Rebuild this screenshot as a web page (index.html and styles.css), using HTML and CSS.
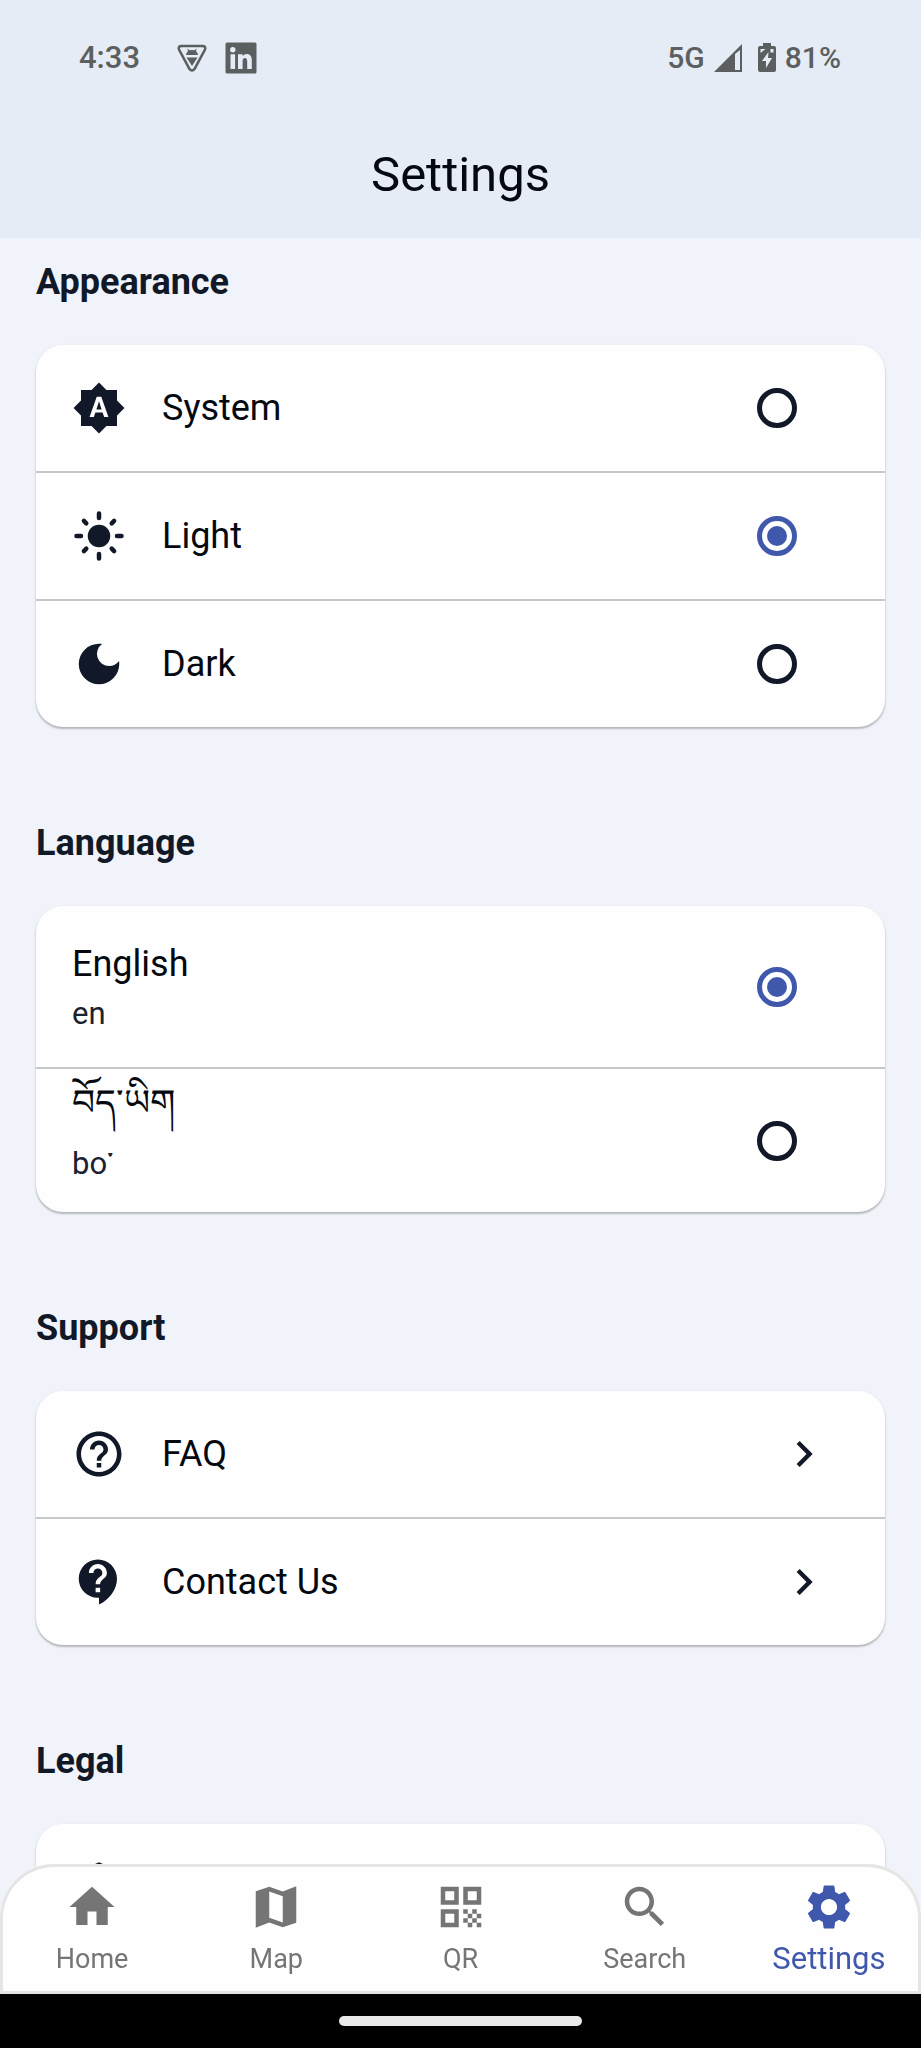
FILE: index.html
```html
<!DOCTYPE html>
<html lang="en">
<head>
<meta charset="utf-8">
<meta name="viewport" content="width=device-width, initial-scale=1">
<title>Settings</title>
<link rel="stylesheet" href="styles.css">
</head>
<body>
<header class="top">
  <div class="status">
    <div class="status-group status-left">
      <span>4:33</span>
      <span class="notices">
        <svg class="notice" viewBox="0 0 32 32" aria-hidden="true"><path d="M5 4h22q3 .5 2 3.500L18.500 27q-2.500 3-5 0L3 7.500q-1-3 2-3.500z" fill="none" stroke="currentColor" stroke-width="2.600"/><path d="M10 13q.4-3 2.200-4L11 6.800 14 8.200q2-.5 4 0l3-1.400L19.800 9q1.800 1 2.200 4zM10.500 15.500h11L16 24z" fill="currentColor"/></svg>
        <svg class="notice" viewBox="0 0 32 32" aria-hidden="true"><path fill="currentColor" fill-rule="evenodd" d="M2 .5h28q1.500 0 1.500 1.500v28q0 1.500-1.500 1.500H2Q.5 31.500.5 30V2Q.5.5 2 .5zM5.500 12.200V27h4.600V12.200zM7.800 5a2.700 2.700 0 1 0 0 5.400 2.700 2.700 0 0 0 0-5.400zM13 12.200V27h4.600v-8c0-3.800 4.600-4 4.600 0v8h4.600v-9.200c0-6.800-6.800-7.200-9.200-3.700v-1.900z"/></svg>
      </span>
    </div>
    <div class="status-group status-right">
      <span>5G</span>
      <svg class="signal" viewBox="0 0 28 28" aria-hidden="true"><path fill="currentColor" fill-rule="evenodd" d="M28 0v28H0zM21 10v16h5V6z"/></svg>
      <svg class="battery" viewBox="0 0 18 30" aria-hidden="true"><path fill="currentColor" fill-rule="evenodd" d="M5 0h8v3h3q2 0 2 2v22q0 2-2 2H2q-2 0-2-2V5q0-2 2-2h3zM10.500 9L4 18h4v7l6-10h-4zM2.500 6v4l5-4zM15.500 6h-3v3.500h3z"/></svg>
      <span>81%</span>
    </div>
  </div>
  <h1 class="title">Settings</h1>
</header>

<main class="content">
  <section class="section">
    <h2 class="heading" id="appearance">Appearance</h2>
    <div class="card" role="radiogroup" aria-labelledby="appearance">
      <label class="row">
        <svg class="icon" viewBox="0 0 24 24" aria-hidden="true"><path d="M10.850 12.650h2.300L12 9l-1.150 3.650zM20 8.690V4h-4.690L12 .69 8.690 4H4v4.690L.69 12 4 15.310V20h4.690L12 23.310 15.310 20H20v-4.690L23.310 12 20 8.690zM14.300 16l-.7-2h-3.200l-.7 2H7.800L11 7h2l3.200 9h-1.900z"/></svg>
        <span class="label">System</span>
        <input class="radio" type="radio" name="theme">
      </label>
      <label class="row">
        <svg class="icon" viewBox="0 0 24 24" aria-hidden="true"><circle cx="12" cy="12" r="5"/><path class="rays" d="M2 12h2M20 12h2M12 2v2M12 20v2M5.290 5.290l1.060 1.060M17.650 17.650l1.060 1.060M18.710 5.290l-1.060 1.060M6.350 17.650l-1.060 1.060"/></svg>
        <span class="label">Light</span>
        <input class="radio" type="radio" name="theme" checked>
      </label>
      <label class="row">
        <svg class="icon" viewBox="0 0 24 24" aria-hidden="true"><path d="M12 3a9 9 0 1 0 9 9c0-.46-.04-.92-.1-1.360a5.389 5.389 0 0 1-4.400 2.260 5.403 5.403 0 0 1-3.140-9.800c-.44-.06-.9-.1-1.360-.1z"/></svg>
        <span class="label">Dark</span>
        <input class="radio" type="radio" name="theme">
      </label>
    </div>
  </section>

  <section class="section">
    <h2 class="heading" id="language">Language</h2>
    <div class="card" role="radiogroup" aria-labelledby="language">
      <label class="row row-english">
        <span class="label">English<small class="code">en</small></span>
        <input class="radio" type="radio" name="language" checked>
      </label>
      <label class="row row-tibetan">
        <span class="label" lang="bo">བོད་ཡིག<small class="code">bo་</small></span>
        <input class="radio" type="radio" name="language">
      </label>
    </div>
  </section>

  <section class="section">
    <h2 class="heading">Support</h2>
    <div class="card">
      <a class="row row-link" href="#faq">
        <svg class="icon" viewBox="0 0 24 24" aria-hidden="true"><path d="M11 18h2v-2h-2v2zm1-16C6.480 2 2 6.480 2 12s4.480 10 10 10 10-4.480 10-10S17.520 2 12 2zm0 18c-4.410 0-8-3.590-8-8s3.590-8 8-8 8 3.590 8 8-3.590 8-8 8zm0-14c-2.210 0-4 1.790-4 4h2c0-1.100.9-2 2-2s2 .9 2 2c0 2-3 1.750-3 5h2c0-2.250 3-2.500 3-5 0-2.210-1.790-4-4-4z"/></svg>
        <span class="label">FAQ</span>
        <svg class="chevron" viewBox="0 0 24 24" aria-hidden="true"><path d="M10 6L8.590 7.410 13.170 12l-4.580 4.590L10 18l6-6z"/></svg>
      </a>
      <a class="row row-link" href="#contact">
        <svg class="icon" viewBox="0 0 24 24" aria-hidden="true"><path d="M11.500 2C6.810 2 3 5.810 3 10.500S6.810 19 11.500 19h.5v3c4.860-2.340 8-7 8-11.500C20 5.810 16.190 2 11.500 2zm1 14.500h-2v-2h2v2zm0-3.500h-2c0-3.250 3-3 3-5 0-1.100-.9-2-2-2s-2 .9-2 2h-2c0-2.210 1.790-4 4-4s4 1.790 4 4c0 2.500-3 2.750-3 5z"/></svg>
        <span class="label">Contact Us</span>
        <svg class="chevron" viewBox="0 0 24 24" aria-hidden="true"><path d="M10 6L8.590 7.410 13.170 12l-4.580 4.590L10 18l6-6z"/></svg>
      </a>
    </div>
  </section>

  <section class="section">
    <h2 class="heading">Legal</h2>
    <div class="card">
      <div class="row row-link">
        <svg class="icon" viewBox="0 0 24 24" aria-hidden="true"><path d="M12 1L3 5v6c0 5.550 3.840 10.740 9 12 5.160-1.260 9-6.450 9-12V5l-9-4z"/></svg>
      </div>
    </div>
  </section>
</main>

<footer class="bottom">
  <nav class="tabs">
    <a class="tab" href="#home"><svg class="icon" viewBox="0 0 24 24" aria-hidden="true"><path d="M10 20v-6h4v6h5v-8h3L12 3 2 12h3v8z"/></svg><span>Home</span></a>
    <a class="tab" href="#map"><svg class="icon" viewBox="0 0 24 24" aria-hidden="true"><path d="M15 5.100L9 3 3 5.020v16.200l6-2.330 6 2.100 6-2.020V2.770L15 5.100zm0 13.790l-6-2.110V5.110l6 2.110v11.670z"/></svg><span>Map</span></a>
    <a class="tab" href="#qr"><svg class="icon" viewBox="0 0 24 24" aria-hidden="true"><path d="M3 11h8V3H3v8zm2-6h4v4H5V5zM3 21h8v-8H3v8zm2-6h4v4H5v-4zM13 3v8h8V3h-8zm6 6h-4V5h4v4zM19 19h2v2h-2zM13 13h2v2h-2zM15 15h2v2h-2zM13 17h2v2h-2zM15 19h2v2h-2zM17 17h2v2h-2zM17 13h2v2h-2zM19 15h2v2h-2z"/></svg><span>QR</span></a>
    <a class="tab" href="#search"><svg class="icon" viewBox="0 0 24 24" aria-hidden="true"><path d="M15.500 14h-.79l-.28-.27C15.410 12.590 16 11.110 16 9.500 16 5.910 13.090 3 9.500 3S3 5.910 3 9.500 5.910 16 9.500 16c1.610 0 3.090-.59 4.230-1.570l.27.28v.79l5 4.990L20.490 19l-4.990-5zm-6 0C7.010 14 5 11.990 5 9.500S7.010 5 9.500 5 14 7.010 14 9.500 11.990 14 9.500 14z"/></svg><span>Search</span></a>
    <a class="tab tab-active" href="#settings" aria-current="page"><svg class="icon" viewBox="0 0 24 24" aria-hidden="true"><path d="M19.140 12.940c.04-.3.06-.61.06-.94 0-.32-.02-.64-.07-.94l2.030-1.580c.18-.14.23-.41.12-.61l-1.920-3.320c-.12-.22-.37-.29-.59-.22l-2.390.96c-.5-.38-1.030-.7-1.620-.94l-.36-2.540c-.04-.24-.24-.41-.48-.41h-3.840c-.24 0-.43.17-.47.41l-.36 2.540c-.59.24-1.130.57-1.620.94l-2.390-.96c-.22-.08-.47 0-.59.22L2.740 8.870c-.12.21-.08.47.12.61l2.030 1.580c-.05.3-.09.63-.09.94s.02.64.07.94l-2.030 1.580c-.18.14-.23.41-.12.61l1.920 3.320c.12.22.37.29.59.22l2.390-.96c.5.38 1.030.7 1.620.94l.36 2.540c.05.24.24.41.48.41h3.840c.24 0 .44-.17.47-.41l.36-2.540c.59-.24 1.130-.56 1.620-.94l2.390.96c.22.08.47 0 .59-.22l1.920-3.320c.12-.22.07-.47-.12-.61l-2.010-1.580zM12 15.600c-1.980 0-3.600-1.620-3.600-3.600s1.620-3.600 3.600-3.600 3.600 1.620 3.600 3.600-1.620 3.600-3.600 3.600z"/></svg><span>Settings</span></a>
  </nav>
  <div class="gesture"><span class="pill"></span></div>
</footer>
</body>
</html>
```
FILE: styles.css
```css
* { box-sizing: border-box; }

body {
  margin: 0;
  height: 100vh;
  display: flex;
  flex-direction: column;
  background: #f0f3f9;
  color: #05080f;
  font-family: Roboto, "Noto Sans", sans-serif;
}

.top {
  flex: none;
  background: #e5ecf5;
}

.status {
  display: flex;
  justify-content: space-between;
  padding: 39px 80px 0 79px;
  color: #5c5f60;
  font-size: 31px;
  font-weight: 500;
  line-height: 38px;
}

.status-group { display: flex; align-items: center; }
.status-left { gap: 36px; }
.status-right { gap: 9px; font-size: 30px; }
.notices { display: flex; gap: 17px; }
.notice { width: 32px; height: 32px; }
.signal { width: 28px; height: 28px; }
.battery { width: 18px; height: 30px; margin-left: 7px; }

.title {
  margin: 0;
  padding: 67px 0 32px;
  font-size: 49px;
  font-weight: 400;
  line-height: 62px;
  text-align: center;
}

.content {
  flex: 1;
  min-height: 0;
  padding: 23px 36px 190px;
  display: flex;
  flex-direction: column;
  gap: 95px;
  overflow-y: auto;
  scrollbar-width: none;
}

.heading {
  margin: 0 0 42px;
  color: #111827;
  font-size: 36px;
  font-weight: 700;
  line-height: 42px;
}

.card {
  border-radius: 27px;
  background: #fefefe;
  box-shadow: 0 2px 2px rgba(0, 0, 0, 0.2), 0 1px 3px rgba(0, 0, 0, 0.1);
}

.row {
  display: flex;
  align-items: center;
  gap: 36px;
  min-height: 126px;
  padding: 0 88px 0 36px;
  color: inherit;
  text-decoration: none;
}

.row + .row {
  min-height: 128px;
  border-top: 2px solid #c5c7c8;
}

.row-link { padding-right: 55px; }
.row-english { min-height: 161px; }
.card .row-tibetan { min-height: 145px; }

.icon {
  flex: none;
  width: 54px;
  height: 54px;
  fill: currentColor;
}

.row .icon { color: #111827; }
.rays { stroke: currentColor; stroke-width: 2; stroke-linecap: round; }
.chevron { flex: none; width: 52px; height: 52px; fill: #111827; }

.label {
  flex: 1;
  font-size: 36px;
  line-height: 54px;
}

.code {
  display: block;
  color: #1b2130;
  font-size: 31px;
  line-height: 46px;
}

.row-tibetan .label {
  align-self: flex-start;
  line-height: 68px;
}

.row-tibetan .code {
  line-height: 54px;
}

.radio {
  appearance: none;
  flex: none;
  width: 40px;
  height: 40px;
  margin: 0;
  border: 5px solid #111827;
  border-radius: 50%;
  background: #fefefe;
}

.radio:checked {
  padding: 5px;
  border-color: #3f58ab;
  background: #3f58ab content-box;
}

.bottom {
  position: fixed;
  right: 0;
  bottom: 0;
  left: 0;
}

.tabs {
  display: flex;
  border-radius: 54px 54px 0 0;
  background: #fefefe;
  box-shadow: inset 0 0 0 3px #e5e5e6;
}

.tab {
  flex: 1 1 0;
  min-width: 0;
  display: flex;
  flex-direction: column;
  align-items: center;
  gap: 8px;
  padding: 16px 0 18px;
  color: #757575;
  font-size: 27px;
  line-height: 34px;
  text-decoration: none;
}

.tab-active { color: #3f58ab; font-size: 31px; }

.gesture {
  display: flex;
  justify-content: center;
  padding: 22px 0;
  background: #000;
}

.pill {
  width: 243px;
  height: 10px;
  border-radius: 5px;
  background: #e9e9e9;
}
```
